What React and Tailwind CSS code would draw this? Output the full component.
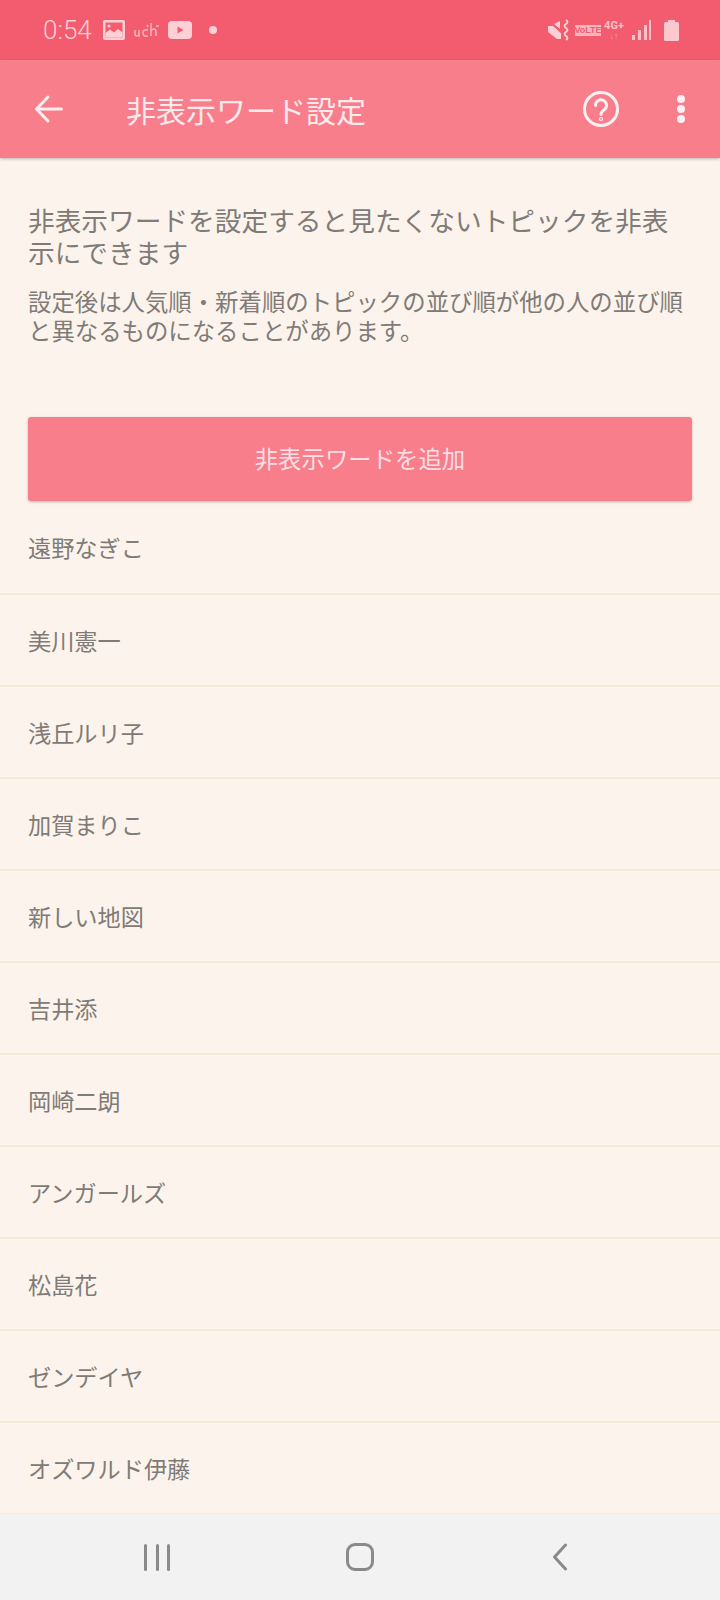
import React from "react";

const FONT = "font-['Noto_Sans_CJK_JP','Noto_Sans',sans-serif]";
const items = ["遠野なぎこ","美川憲一","浅丘ルリ子","加賀まりこ","新しい地図","吉井添","岡崎二朗","アンガールズ","松島花","ゼンデイヤ","オズワルド伊藤"];

function StatusBar() {
  return (
    <div className="h-[60px] bg-[#f25c6e] flex items-center justify-between pl-[43px] pr-[41px] text-[#fdd0d6]">
      <div className="flex items-center">
        <span className="font-['Roboto',sans-serif] font-light text-[26px] leading-none w-[50px]">0:54</span>
        <svg width="22" height="20" viewBox="0 0 22 20" className="ml-[10px]">
          <rect width="22" height="20" rx="2" fill="#fdd0d6" />
          <rect x="2.5" y="2.5" width="17" height="15" fill="#f25c6e" />
          <path d="M2.5 17.5 V13 L7 9.5 L11 12.5 L15 9 L19.5 12.5 V17.5Z" fill="#fdd0d6" />
          <circle cx="6" cy="6" r="1.6" fill="#fdd0d6" />
        </svg>
        <svg width="26" height="16" viewBox="0 0 26 16" className="ml-[9px]" fill="none" stroke="#fbb1ba" strokeWidth="1.6">
          <path d="M1 8v4q0 2 2 2t2-2V8M5 14h1" />
          <path d="M14 8q-5-1-5 3t5 3" />
          <path d="M17 1v13M17 9q1-2 3-2t2 3v4" />
          <path d="M13 3l1 2M22 4l3 0" />
        </svg>
        <svg width="24" height="18" viewBox="0 0 24 18" className="ml-[8px]">
          <rect width="24" height="18" rx="4" fill="#fdd0d6" />
          <path d="M9.5 5.5 L15.5 9 L9.5 12.5Z" fill="#f25c6e" />
        </svg>
        <span className="ml-[17px] w-[8px] h-[8px] rounded-full bg-[#fdd0d6]" />
      </div>
      <div className="flex items-center">
        <svg width="22" height="22" viewBox="0 0 22 22">
          <path d="M0 7h5l8 7v6h-4L0 13Z" fill="#fdd0d6" />
          <path d="M0 1 L14 14" stroke="#f25c6e" strokeWidth="1.2" />
          <path d="M6 5 L12 2V10Z" fill="#fdd0d6" />
          <path d="M18 1q3 2 0 4t0 4q3 2 0 4t0 4 0 4" stroke="#fdd0d6" strokeWidth="1.8" fill="none" />
        </svg>
        <span className="ml-[5px] h-[11px] w-[26px] bg-[#fbb5bd] flex items-center justify-center overflow-hidden font-['Liberation_Sans',sans-serif] text-[9px] leading-none font-bold text-[#f25c6e]">VoLTE</span>
        <div className="ml-[3px] w-[20px] flex flex-col items-center font-['Roboto',sans-serif] font-bold text-[#fbc1c8]">
          <span className="text-[11px] leading-[11px]">4G+</span>
          <span className="text-[9px] leading-[10px] text-[#fb9aa6]">↓↑</span>
        </div>
        <svg width="20" height="20" viewBox="0 0 20 20" className="ml-[8px]" fill="#fbc1c8">
          <rect x="0" y="15" width="3" height="5" />
          <rect x="6" y="10" width="3" height="10" />
          <rect x="12" y="5" width="3" height="15" />
          <rect x="17" y="0" width="2" height="20" />
        </svg>
        <svg width="15" height="21" viewBox="0 0 15 21" className="ml-[12px]" fill="#fbc8ce">
          <rect x="4" y="0" width="7" height="3" />
          <rect x="0" y="2" width="15" height="19" rx="1.5" />
        </svg>
      </div>
    </div>
  );
}

function Header() {
  return (
    <div className="h-[98px] bg-[#f97e8c] flex items-center relative z-10 shadow-[0_1px_3px_rgba(0,0,0,0.25)]">
      <svg width="30" height="30" viewBox="0 0 30 30" className="ml-[34px]" fill="none" stroke="#fdeef0" strokeWidth="3" strokeLinecap="round" strokeLinejoin="round">
        <path d="M27.5 15H3M14 3 L2.5 15 L14 27" />
      </svg>
      <h1 className="ml-[62px] flex-1 text-[30px] leading-none font-normal text-[#fdeaed]">非表示ワード設定</h1>
      <svg width="38" height="38" viewBox="0 0 38 38" fill="none" stroke="#fdf0f2" strokeWidth="3" strokeLinecap="round">
        <circle cx="19" cy="19" r="16.5" />
        <path d="M13.5 15.5a5.5 5.5 0 1 1 8.5 4.5q-3 1.8-3 4.5" />
        <circle cx="19" cy="29" r="0.6" />
      </svg>
      <div className="ml-[57px] mr-[35px] flex flex-col gap-[2px]">
        <span className="w-[8px] h-[8px] rounded-full bg-[#fdf0f2]" />
        <span className="w-[8px] h-[8px] rounded-full bg-[#fdf0f2]" />
        <span className="w-[8px] h-[8px] rounded-full bg-[#fdf0f2]" />
      </div>
    </div>
  );
}

export default function App() {
  return (
    <div className={`w-[720px] h-[1600px] bg-[#fcf4ec] flex flex-col overflow-hidden ${FONT}`}>
      <StatusBar />
      <Header />
      <div className="flex-1 flex flex-col overflow-hidden">
        <div className="px-[28px] pt-[46px]">
          <p className="text-[26.7px] leading-[32px] font-normal text-[#807b77]">非表示ワードを設定すると見たくないトピックを非表示にできます</p>
          <p className="mt-[19px] text-[23.4px] leading-[29px] font-normal text-[#807b77]">設定後は人気順・新着順のトピックの並び順が他の人の並び順と異なるものになることがあります。</p>
          <button className="mt-[72px] w-full h-[84px] rounded-[3px] bg-[#f97e8c] text-[23.4px] font-normal text-[#fbdfe3] shadow-[0_1px_3px_rgba(0,0,0,0.25)]">非表示ワードを追加</button>
        </div>
        <ul>
          {items.map((t, i) => (
            <li key={t} className={`flex items-center px-[28px] border-b-2 border-[#f4ead8] text-[23.2px] font-normal text-[#807b77] ${i === 0 ? "h-[94px]" : "h-[92px]"}`}>{t}</li>
          ))}
        </ul>
      </div>
      <div className="h-[86px] bg-[#f2f2f2] flex items-center justify-center">
        <div className="w-[203px] flex justify-center">
          <div className="flex gap-[8.5px]">
            <span className="w-[3px] h-[27px] bg-[#8a8a8a] rounded-full" />
            <span className="w-[3px] h-[27px] bg-[#8a8a8a] rounded-full" />
            <span className="w-[3px] h-[27px] bg-[#8a8a8a] rounded-full" />
          </div>
        </div>
        <div className="w-[203px] flex justify-center">
          <span className="w-[28px] h-[28px] border-[3px] border-[#8a8a8a] rounded-[9px]" />
        </div>
        <div className="w-[203px] flex justify-center">
          <svg width="16" height="28" viewBox="0 0 16 28" className="mr-[6px]" fill="none" stroke="#8a8a8a" strokeWidth="3" strokeLinecap="round" strokeLinejoin="round"><path d="M13.5 2 L2.5 14 L13.5 26" /></svg>
        </div>
      </div>
    </div>
  );
}
